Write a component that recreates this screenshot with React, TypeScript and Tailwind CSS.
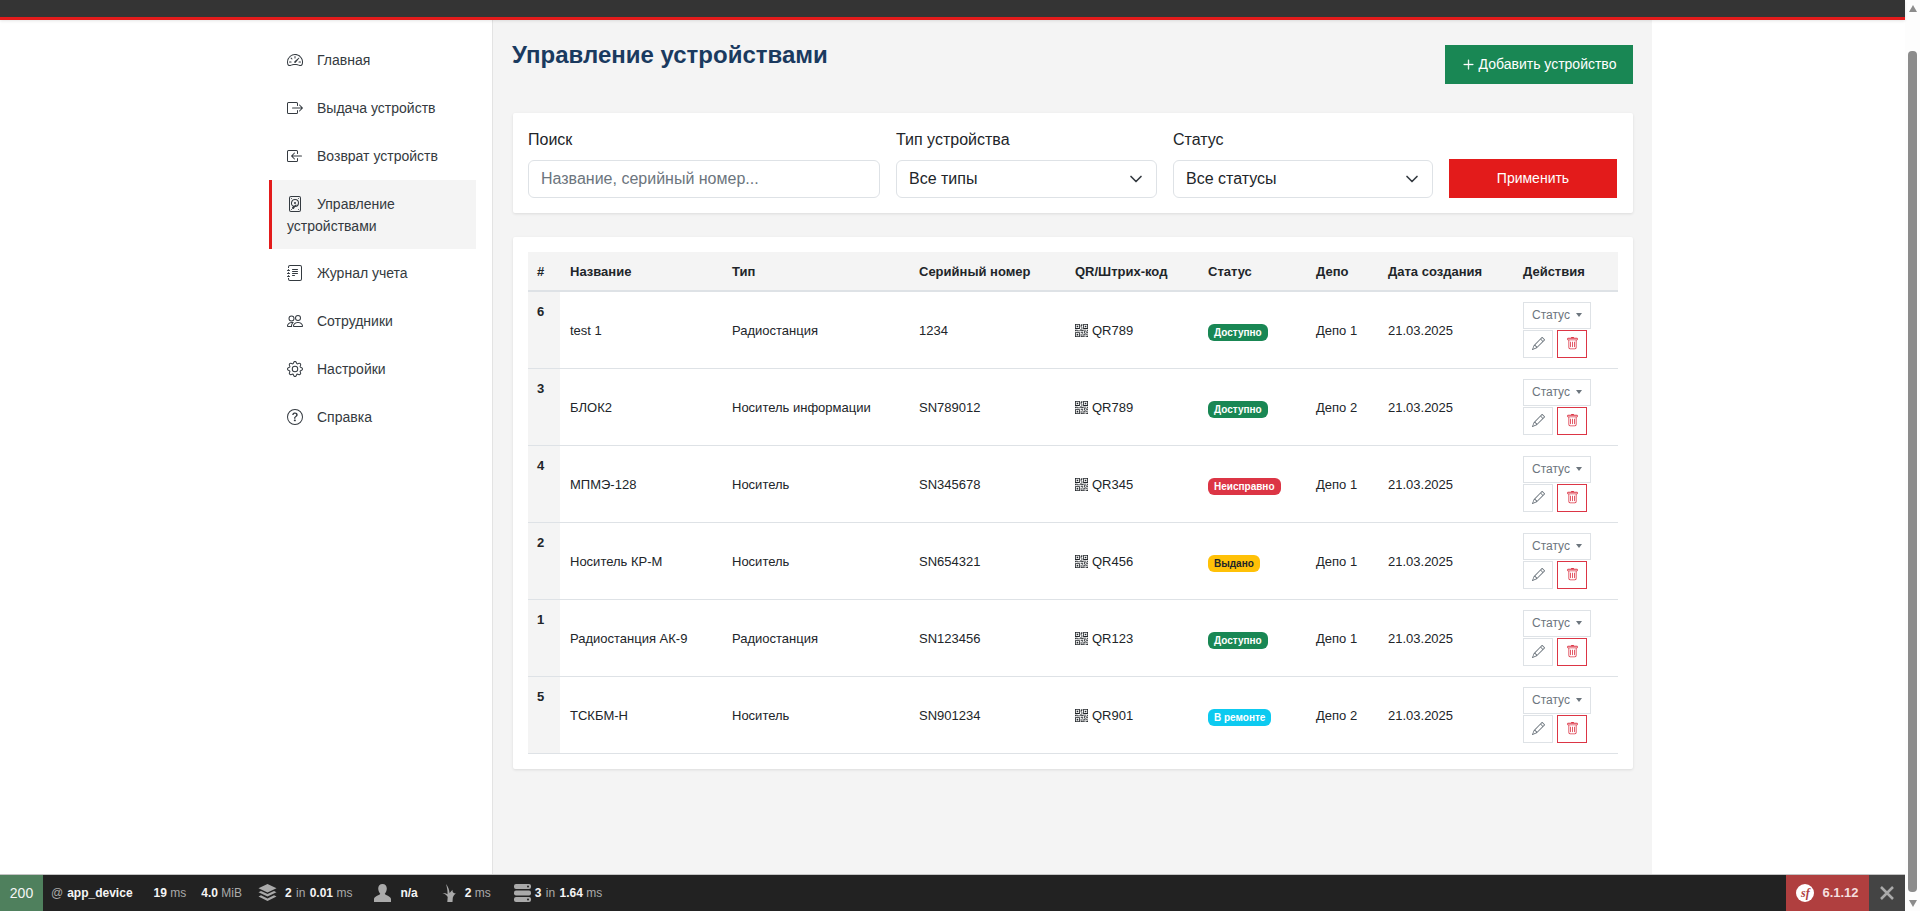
import { ChevronDown } from 'lucide-react'
import {
  BsBoxArrowInLeft,
  BsBoxArrowRight,
  BsDeviceHdd,
  BsGear,
  BsJournalText,
  BsPeople,
  BsPencil,
  BsPlusLg,
  BsQrCode,
  BsQuestionCircle,
  BsSpeedometer2,
  BsTrash,
} from 'react-icons/bs'
import type { IconType } from 'react-icons'

const NAV: { label: string; icon: IconType; active?: boolean }[] = [
  { label: 'Главная', icon: BsSpeedometer2 },
  { label: 'Выдача устройств', icon: BsBoxArrowRight },
  { label: 'Возврат устройств', icon: BsBoxArrowInLeft },
  { label: 'Управление устройствами', icon: BsDeviceHdd, active: true },
  { label: 'Журнал учета', icon: BsJournalText },
  { label: 'Сотрудники', icon: BsPeople },
  { label: 'Настройки', icon: BsGear },
  { label: 'Справка', icon: BsQuestionCircle },
]

const STATUS = {
  ok: { label: 'Доступно', cls: 'bg-[#198754] text-white' },
  broken: { label: 'Неисправно', cls: 'bg-[#dc3545] text-white' },
  issued: { label: 'Выдано', cls: 'bg-[#ffc107] text-[#212529]' },
  repair: { label: 'В ремонте', cls: 'bg-[#0dcaf0] text-white' },
}

const ROWS: { id: number; name: string; type: string; serial: string; qr: string; status: keyof typeof STATUS; depot: string }[] = [
  { id: 6, name: 'test 1', type: 'Радиостанция', serial: '1234', qr: 'QR789', status: 'ok', depot: 'Депо 1' },
  { id: 3, name: 'БЛОК2', type: 'Носитель информации', serial: 'SN789012', qr: 'QR789', status: 'ok', depot: 'Депо 2' },
  { id: 4, name: 'МПМЭ-128', type: 'Носитель', serial: 'SN345678', qr: 'QR345', status: 'broken', depot: 'Депо 1' },
  { id: 2, name: 'Носитель КР-М', type: 'Носитель', serial: 'SN654321', qr: 'QR456', status: 'issued', depot: 'Депо 1' },
  { id: 1, name: 'Радиостанция АК-9', type: 'Радиостанция', serial: 'SN123456', qr: 'QR123', status: 'ok', depot: 'Депо 1' },
  { id: 5, name: 'ТСКБМ-Н', type: 'Носитель', serial: 'SN901234', qr: 'QR901', status: 'repair', depot: 'Депо 2' },
]

const HEADERS = ['#', 'Название', 'Тип', 'Серийный номер', 'QR/Штрих-код', 'Статус', 'Депо', 'Дата создания', 'Действия']
const COL_WIDTHS = ['w-[32px]', 'w-[162px]', 'w-[187px]', 'w-[156px]', 'w-[133px]', 'w-[108px]', 'w-[72px]', 'w-[135px]', 'w-[105px]']

function Sidebar() {
  return (
    <aside className="w-[493px] shrink-0 border-r border-[#e3e3e3] bg-white pl-[269px] pr-4 pt-4">
      {NAV.map(({ label, icon: Icon, active }) => (
        <a
          key={label}
          className={
            'block border-l-[3px] py-[12.5px] pl-[15px] pr-3 text-[14px] leading-[22px] text-[#343a40] ' +
            (active ? 'border-[#e31b1b] bg-[#f4f4f4]' : 'mb-px border-transparent')
          }
        >
          <Icon className="mr-[14px] inline-block h-4 w-4 -translate-y-[1px] align-middle" />
          {label}
        </a>
      ))}
    </aside>
  )
}

function FilterBar() {
  const box = 'flex h-[38px] items-center rounded-[6px] border border-[#dee2e6] bg-white pl-3 pr-[10px] text-[16px]'
  return (
    <div className="mt-[29px] flex h-[100px] items-end gap-4 rounded-[2px] bg-white px-[15px] pb-[15px] shadow-[0_1px_3px_rgba(0,0,0,0.1)]">
      <div className="w-[352px]">
        <p className="mb-2 text-[16px] leading-6 text-[#212529]">Поиск</p>
        <div className={box + ' text-[#6c757d]'}>Название, серийный номер...</div>
      </div>
      <div className="w-[261px]">
        <p className="mb-2 text-[16px] leading-6 text-[#212529]">Тип устройства</p>
        <div className={box + ' justify-between text-[#212529]'}>
          Все типы
          <ChevronDown className="h-5 w-5 text-[#343a40]" strokeWidth={2} />
        </div>
      </div>
      <div className="w-[260px]">
        <p className="mb-2 text-[16px] leading-6 text-[#212529]">Статус</p>
        <div className={box + ' justify-between text-[#212529]'}>
          Все статусы
          <ChevronDown className="h-5 w-5 text-[#343a40]" strokeWidth={2} />
        </div>
      </div>
      <button className="h-[39px] w-[168px] bg-[#e31b1b] text-[14px] font-normal text-white">Применить</button>
    </div>
  )
}

function DeviceRow({ row }: { row: (typeof ROWS)[number] }) {
  const status = STATUS[row.status]
  const td = 'px-[10px] pt-[2px] align-middle'
  return (
    <tr className="h-[77px] border-b border-[#dee2e6] text-[13px] text-[#212529]">
      <td className="bg-[#f4f4f4] pt-[10px] pl-[9px] align-top font-bold">{row.id}</td>
      <td className={td}>{row.name}</td>
      <td className={td}>{row.type}</td>
      <td className={td}>{row.serial}</td>
      <td className={td}>
        <BsQrCode className="mr-1 inline-block h-[13px] w-[13px] -translate-y-[1px] align-middle" />
        {row.qr}
      </td>
      <td className="px-[10px] align-middle">
        <span className={'inline-block translate-y-[2px] rounded-[6px] px-[6px] py-[3px] text-[10px] leading-[11px] font-bold ' + status.cls}>
          {status.label}
        </span>
      </td>
      <td className={td}>{row.depot}</td>
      <td className={td}>21.03.2025</td>
      <td className="px-[10px] align-middle">
        <div className="flex h-[27px] w-[68px] items-center justify-center gap-[6px] border border-[#dee2e6] text-[12px] text-[#6c757d]">
          Статус
          <span className="h-0 w-0 border-x-[3.5px] border-t-[4px] border-x-transparent border-t-[#6c757d]" />
        </div>
        <div className="mt-px flex gap-1">
          <button className="flex h-[28px] w-[30px] items-center justify-center border border-[#dee2e6] text-[#6c757d]">
            <BsPencil className="h-[13px] w-[13px]" />
          </button>
          <button className="flex h-[28px] w-[30px] items-center justify-center border border-[#dc3545] text-[#dc3545]">
            <BsTrash className="h-[13px] w-[13px]" />
          </button>
        </div>
      </td>
    </tr>
  )
}

function DeviceTable() {
  return (
    <div className="mt-[24px] rounded-[2px] bg-white p-[15px] shadow-[0_1px_3px_rgba(0,0,0,0.1)]">
      <table className="w-full table-fixed border-collapse">
        <colgroup>
          {COL_WIDTHS.map((w) => (
            <col key={w} className={w} />
          ))}
        </colgroup>
        <thead>
          <tr className="h-[39px] border-b-2 border-[#dee2e6] bg-[#f4f4f4] text-left text-[13px] font-bold text-[#212529]">
            {HEADERS.map((h, i) => (
              <th key={h} className={'pt-[2px] ' + (i === 0 ? 'pl-[9px]' : 'px-[10px]')}>
                {h}
              </th>
            ))}
          </tr>
        </thead>
        <tbody>
          {ROWS.map((row) => (
            <DeviceRow key={row.id} row={row} />
          ))}
        </tbody>
      </table>
    </div>
  )
}

function ToolbarValue({ value, unit }: { value: string; unit: string }) {
  return (
    <span>
      <b className="font-bold text-[#f5f5f5]">{value}</b> <span className="text-[#aaa]">{unit}</span>
    </span>
  )
}

function DebugToolbar() {
  return (
    <div className="flex h-[37px] shrink-0 items-center border-t border-[#c4c4c4] bg-[#222] text-[12px] text-[#f5f5f5]">
      <div className="flex h-full w-[43px] items-center justify-center bg-[#4f805d] text-[14px]">200</div>
      <span className="ml-[8px] text-[#aaa]">@</span>
      <b className="ml-[4px] font-bold">app_device</b>
      <span className="ml-[21px]"><ToolbarValue value="19" unit="ms" /></span>
      <span className="ml-[15px]"><ToolbarValue value="4.0" unit="MiB" /></span>
      <svg className="ml-[16px] h-[18px] w-[19px]" viewBox="0 0 19 18" fill="#aaa">
        <path d="M9.500 0l9 4.200-9 4.300-9-4.300z" />
        <path d="M.5 8.200l2.500-1.200 6.500 3.100L16 7l2.500 1.200-9 4.300z" />
        <path d="M.5 12.500l2.500-1.200 6.500 3.100 6.500-3.100 2.500 1.200-9 4.500z" />
      </svg>
      <span className="ml-[8px]">
        <b className="font-bold">2</b> <span className="ml-px text-[#aaa]">in</span>{' '}
        <span className="ml-px"><ToolbarValue value="0.01" unit="ms" /></span>
      </span>
      <svg className="ml-[22px] h-[18px] w-[17px]" viewBox="0 0 17 18" fill="#aaa">
        <path d="M8.500 0c2.700 0 4.300 1.900 4.300 4.600 0 2.300-1 4-2 5.200 0 1.200 6.200 2.400 6.200 5.200V18H0v-3c0-2.800 6.200-4 6.200-5.200-1-1.200-2-2.900-2-5.200C4.200 1.900 5.800 0 8.500 0z" />
      </svg>
      <b className="ml-[9px] font-bold">n/a</b>
      <svg className="ml-[24px] h-[18px] w-[14px]" viewBox="0 0 14 18" fill="#aaa">
        <path d="M4 0c2 2.500 3.300 5.500 3.600 9l2.900-3.200c-.2 1.300.2 2.300 1 3 .6.500 1.500.700 2.500.6-1.600.9-2.700 2.400-3.200 4.400L10.500 18H5.300l.4-5c-.9-1.600-2.500-2.900-5.200-4 1.800-.1 3.500.3 5 1.200C5.700 6.500 5 3.300 4 0z" />
      </svg>
      <span className="ml-[9px]"><ToolbarValue value="2" unit="ms" /></span>
      <svg className="ml-[23px] h-[18px] w-[17px]" viewBox="0 0 17 18">
        <rect width="17" height="5" rx="2" fill="#aaa" />
        <rect y="6.500" width="17" height="5" rx="2" fill="#aaa" />
        <rect y="13" width="17" height="5" rx="2" fill="#aaa" />
        <circle cx="14" cy="2.500" r="1" fill="#222" />
        <circle cx="14" cy="15.500" r="1" fill="#222" />
      </svg>
      <span className="ml-[4px]">
        <b className="font-bold">3</b> <span className="ml-px text-[#aaa]">in</span>{' '}
        <span className="ml-px"><ToolbarValue value="1.64" unit="ms" /></span>
      </span>
      <div className="ml-auto flex h-full w-[83px] items-center justify-center gap-[8px] bg-[#b03f3f] text-[13px] font-bold text-[#f5dede]">
        <span className="flex h-[18px] w-[18px] items-center justify-center rounded-full bg-white font-['Liberation_Serif',serif] text-[12px] font-bold text-[#b03f3f] italic">sf</span>
        6.1.12
      </div>
      <div className="flex h-full w-[36px] items-center justify-center bg-[#444]">
        <svg className="h-[14px] w-[14px]" viewBox="0 0 14 14" stroke="#aaa" strokeWidth="2.500">
          <path d="M1 1l12 12M13 1L1 13" />
        </svg>
      </div>
    </div>
  )
}

function Scrollbar() {
  return (
    <div className="flex w-[15px] shrink-0 flex-col items-center bg-[#fdfdfd]">
      <span className="mt-[5px] h-0 w-0 border-x-[4.5px] border-b-[7px] border-x-transparent border-b-[#8c8c8c]" />
      <div className="mt-[39px] h-[841px] w-[9px] rounded-[4px] bg-[#8c8c8c]" />
      <span className="mt-[8px] h-0 w-0 border-x-[4.5px] border-t-[7px] border-x-transparent border-t-[#8c8c8c]" />
    </div>
  )
}

export default function App() {
  return (
    <div className="flex h-[911px] overflow-hidden bg-white font-['Liberation_Sans',Arial,sans-serif]">
      <div className="flex min-w-0 flex-1 flex-col">
        <div className="relative z-10 h-[20px] shrink-0 border-b-[3px] border-[#e31b1b] bg-[#343434] shadow-[0_1px_3px_rgba(0,0,0,0.1)]" />
        <div className="flex min-h-0 flex-1">
          <Sidebar />
          <main className="w-[1159px] shrink-0 bg-[#f4f4f4] pt-5 pr-[19px] pl-5">
            <div className="flex items-start justify-between">
              <h1 className="-ml-px text-[24px] leading-[29px] font-bold text-[#1a3a5f]">Управление устройствами</h1>
              <button className="mt-[5px] flex h-[39px] w-[188px] items-center justify-center gap-1 bg-[#198754] text-[14px] text-white">
                <BsPlusLg className="h-[13px] w-[13px] stroke-current stroke-[0.5]" />
                Добавить устройство
              </button>
            </div>
            <FilterBar />
            <DeviceTable />
          </main>
        </div>
        <DebugToolbar />
      </div>
      <Scrollbar />
    </div>
  )
}
